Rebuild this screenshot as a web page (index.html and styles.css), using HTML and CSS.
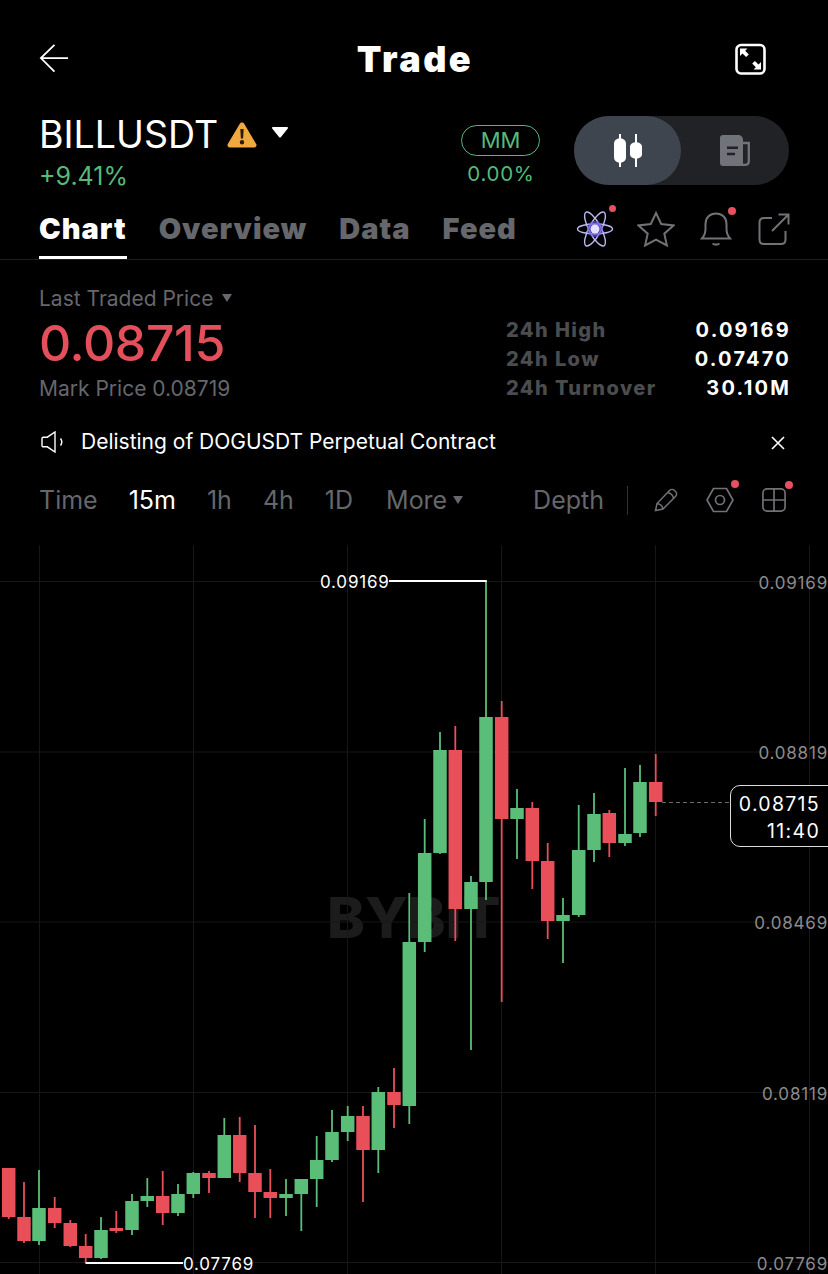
FILE: index.html
```html
<!DOCTYPE html>
<html lang="en">
<head>
<meta charset="utf-8">
<title>Trade</title>
<link rel="stylesheet" href="styles.css">
</head>
<body>
<main class="app">
  <header class="topbar">
    <svg class="ico-back" viewBox="0 0 32 32"><path d="M31 15H2M16.500 1 2 15l14.500 14.500"/></svg>
    <h1 class="title">Trade</h1>
    <svg class="ico-expand" viewBox="0 0 32 32"><rect x="1.500" y="1.500" width="28" height="28.500" rx="4.500"/><path class="fill" d="M5 5h7.500l-2.300 2.300 3.600 3.600-2.700 2.700-3.600-3.600L5 12.500zM26 26h-7.500l2.300-2.300-3.600-3.600 2.700-2.700 3.600 3.600 2.500-2.500z"/></svg>
  </header>

  <section class="symbol-row">
    <div class="symbol-info">
      <div class="symbol-name">
        <span class="symbol-text">BILLUSDT</span>
        <svg class="ico-warn" viewBox="0 0 30 27"><path d="M15 1.500c.9 0 1.700.5 2.200 1.300l12 20.300c.9 1.600-.2 3.400-2 3.400H2.800c-1.800 0-2.900-1.800-2-3.400l12-20.300c.5-.8 1.300-1.300 2.200-1.300z"/><path class="mark" d="M13.300 8h3.400l-.6 9.500h-2.200zM15 19a2.200 2.200 0 1 1 0 4.400 2.200 2.200 0 0 1 0-4.400z"/></svg>
        <svg class="ico-caret" viewBox="0 0 16 11"><path d="M1 0h14c1 0 1.300.8.800 1.500L8.800 10.200c-.4.500-1.200.5-1.600 0L.2 1.500C-.3.800 0 0 1 0z"/></svg>
      </div>
      <div class="change">+9.41%</div>
    </div>
    <div class="mm">
      <span class="mm-pill">MM</span>
      <span class="mm-value">0.00%</span>
    </div>
    <div class="toggle">
      <div class="toggle-thumb">
        <svg class="ico-candles" viewBox="0 0 28 33"><path d="M5 0h2v4.300c2.800.6 5 2.200 5 5.200v14c0 3-2.200 4.600-5 5.200V33H5v-4.300c-2.800-.6-5-2.200-5-5.200v-14c0-3 2.200-4.600 5-5.200zM21 0h2v8.300c2.800.6 5 1.900 5 4.200v8c0 2.300-2.200 3.600-5 4.200V33h-2v-8.300c-2.800-.6-5-1.900-5-4.200v-8c0-2.300 2.200-3.600 5-4.200z"/></svg>
      </div>
      <div class="toggle-off">
        <svg class="ico-doc" viewBox="0 0 30 31"><path class="page" d="M3 0h15c3 0 5 2 5 5v26H3c-2 0-3-1-3-3V3c0-2 1-3 3-3z"/><path class="lines" d="M7 12.700h11M7 19h8"/><path class="side" d="M22 8h6.800v18c0 2.500-1.500 3.900-4 3.900H22"/></svg>
      </div>
    </div>
  </section>

  <nav class="tabs">
    <a class="tab active">Chart</a>
    <a class="tab">Overview</a>
    <a class="tab">Data</a>
    <a class="tab">Feed</a>
    <div class="tab-icons">
      <span class="ico-wrap atom-wrap">
        <svg class="ico-atom" viewBox="0 0 38 36"><g class="orbits"><ellipse cx="19" cy="18" rx="17.500" ry="5"/><ellipse cx="19" cy="18" rx="19" ry="6" transform="rotate(62 19 18)"/><ellipse cx="19" cy="18" rx="19" ry="6" transform="rotate(-62 19 18)"/></g><circle class="core-glow" cx="19" cy="18" r="8"/><circle class="core" cx="19" cy="18" r="4.500"/></svg>
        <i class="dot dot-atom"></i>
      </span>
      <svg class="ico-star" viewBox="0 0 38 36"><path d="M19 2l5.200 11 12.300 1.400-9.200 8.300 2.600 11.800L19 28.600 8.100 34.500l2.600-11.800-9.200-8.300L13.800 13z"/></svg>
      <span class="ico-wrap bell-wrap">
        <svg class="ico-bell" viewBox="0 0 32 34"><path d="M2 26.500c2.500-3 3.500-5 3.500-9.500V12C5.500 5.500 10 1.500 16 1.500S26.500 5.500 26.500 12v5c0 4.500 1 6.500 3.500 9.500zM12.500 31.500c2 1.300 5 1.300 7 0"/></svg>
        <i class="dot dot-bell"></i>
      </span>
      <svg class="ico-share" viewBox="0 0 32 32"><path d="M14 5H6C3 5 1.500 6.500 1.500 9.500v17c0 3 1.500 4.500 4.500 4.500h17c3 0 4.500-1.500 4.500-4.500V18M14 18 30.500 1.500M20.500 1.500h10v10"/></svg>
    </div>
  </nav>

  <section class="stats">
    <div class="stats-left">
      <div class="last-label">Last Traded Price <svg class="ico-mini" viewBox="0 0 10 8"><path d="M0 0h10L5 8z"/></svg></div>
      <div class="last-price">0.08715</div>
      <div class="mark-price">Mark Price 0.08719</div>
    </div>
    <dl class="stats-right">
      <dt>24h High</dt><dd>0.09169</dd>
      <dt>24h Low</dt><dd>0.07470</dd>
      <dt>24h Turnover</dt><dd>30.10M</dd>
    </dl>
  </section>

  <section class="notice">
    <svg class="ico-speaker" viewBox="0 0 23 22"><path d="M1 7.500c0-.8.500-1.300 1.300-1.300h4L14 1v20l-7.700-5.200h-4c-.8 0-1.300-.5-1.300-1.300zM19.500 7.500c1.500 2 1.500 5 0 7"/></svg>
    <span class="notice-text">Delisting of DOGUSDT Perpetual Contract</span>
    <svg class="ico-close" viewBox="0 0 14 14"><path d="M1 1l12 12M13 1 1 13"/></svg>
  </section>

  <section class="toolbar">
    <span class="tf tf-time">Time</span>
    <span class="tf tf-on">15m</span>
    <span class="tf">1h</span>
    <span class="tf">4h</span>
    <span class="tf">1D</span>
    <span class="tf tf-more">More<svg class="ico-mini-more" viewBox="0 0 10 8"><path d="M0 0h10L5 8z"/></svg></span>
    <div class="tool-right">
      <span class="tf">Depth</span>
      <i class="sep"></i>
      <svg class="ico-pencil" viewBox="0 0 24 24"><path d="M1.500 22.500 3 15.500 15.500 2.500c1.500-1.500 3.500-1.500 5 0l1 1c1.500 1.500 1.500 3.500 0 5L9 21zM3 15.500c3 .5 5.500 3 6 5.500M13.500 4.500c3 .5 5.500 3 6 6"/></svg>
      <span class="ico-wrap hex-wrap">
        <svg class="ico-hex" viewBox="0 0 28 26"><path d="M7.500 1.500h13L27 13l-6.500 11.500h-13L1 13z"/><circle cx="14" cy="13" r="4.500"/></svg>
        <i class="dot dot-hex"></i>
      </span>
      <span class="ico-wrap grid-wrap">
        <svg class="ico-grid" viewBox="0 0 26 26"><rect x="1" y="1" width="24" height="24" rx="4.500"/><path d="M13 1v24M1 13h24"/></svg>
        <i class="dot dot-grid"></i>
      </span>
    </div>
  </section>

  <section class="chart">
    <span class="watermark">BYBIT</span>
    <svg class="chart-svg" viewBox="0 545 828 729">
      <path class="grid" d="M0 581.500H828M0 752H828M0 922H828M0 1092.500H828M0 1262.500H828M39.500 545V1274M193.500 545V1274M347.500 545V1274M501.500 545V1274M655.500 545V1274M809.500 545V1274"/>
      <path class="wick up" d="M39 1170V1245M101 1217V1259M132 1194V1235M147.300 1178V1207M178 1184V1216M193.300 1172V1198M224.300 1118V1178M286 1179V1216M301.300 1179V1231M316.700 1136V1207M332 1110V1162M347.700 1106V1141M378.300 1087V1173M409.300 893V1124M424.700 819V952M440 732V854M471 876V1050M486 581V900M517 789V859M563 898V963M578.700 805V917M594 793V862M625 768V846M640 765V837"/>
      <path class="body up" d="M39 1208V1241M101 1230V1258M132 1201V1230M147.300 1196V1201M178 1194V1213M193.300 1173V1194M224.300 1135V1178M286 1194V1198M301.300 1179V1194M316.700 1160V1179M332 1132V1160M347.700 1116V1132M378.300 1092V1150M409.300 942V1106M424.700 853V942M440 750V853M471 882V909M486 717V882M517 808V819M563 915V921M578.700 850V915M594 814V850M625 834V843M640 782V833"/>
      <path class="wick down" d="M8.700 1168V1219M24 1182V1243M54.700 1197V1228M70.300 1220V1247M85.700 1234V1263M116.300 1211V1233M162.700 1171V1225M209 1171V1193M239.700 1117V1182M255 1125V1218M270.300 1169V1218M363 1106V1202M394 1068V1128M455.300 726V941M501.700 701V1002M532.300 802V889M547.700 843V939M609.300 810V857M655.700 754V816"/>
      <path class="body down" d="M8.700 1168V1217M24 1217V1241M54.700 1208V1223M70.300 1223V1246M85.700 1246V1258M116.300 1228V1231M162.700 1196V1213M209 1173V1178M239.700 1135V1173M255 1173V1192M270.300 1192V1198M363 1116V1150M394 1092V1105M455.300 750V909M501.700 717V819M532.300 808V861M547.700 861V921M609.300 813V843M655.700 782V802"/>
      <path class="leader" d="M389 581H486.800M85.500 1263H183"/>
      <path class="price-line" d="M662 802.500H730"/>
    </svg>
    <span class="extreme extreme-high">0.09169</span>
    <span class="extreme extreme-low">0.07769</span>
    <span class="axis axis-1">0.09169</span>
    <span class="axis axis-2">0.08819</span>
    <span class="axis axis-3">0.08469</span>
    <span class="axis axis-4">0.08119</span>
    <span class="axis axis-5">0.07769</span>
    <div class="price-tag"><span>0.08715</span><span>11:40</span></div>
  </section>
</main>
</body>
</html>
```
FILE: styles.css
```css
* { box-sizing: border-box; margin: 0; padding: 0; }
html, body { background: #000; }
body { width: 828px; height: 1274px; overflow: hidden; font-family: Inter, "Liberation Sans", sans-serif; color: #fff; }
svg { display: block; flex: none; }
.app { width: 828px; height: 1274px; display: flex; flex-direction: column; }

/* top bar */
.topbar { height: 116px; padding: 42px 61px 0 39px; display: flex; justify-content: space-between; position: relative; }
.ico-back { width: 30px; height: 30px; margin-top: 2px; fill: none; stroke: #fff; stroke-width: 1.9; }
.title { position: absolute; left: 2px; right: 0; top: 36px; text-align: center; font-size: 36px; line-height: 46px; font-weight: 900; letter-spacing: 2.5px; }
.ico-expand { width: 32px; height: 33px; margin-top: 1px; fill: none; stroke: #fff; stroke-width: 2.6; }
.ico-expand .fill { fill: #fff; stroke: none; }

/* symbol row */
.symbol-row { height: 92px; padding: 0 39px; display: flex; align-items: flex-start; }
.symbol-info { width: 421px; }
.symbol-name { display: flex; align-items: center; height: 37px; }
.symbol-text { font-size: 37.500px; line-height: 37px; font-weight: 400; }
.ico-warn { width: 30px; height: 27px; margin-left: 9px; fill: #efa93f; }
.ico-warn .mark { fill: #2a1d08; }
.ico-caret { width: 16px; height: 11px; margin: -5px 0 0 15px; fill: #fff; }
.change { margin-top: 8px; font-size: 25px; line-height: 30px; color: #58b977; }
.mm { width: 79px; margin-top: 9px; display: flex; flex-direction: column; align-items: center; gap: 3px; margin-left: 1px; }
.mm-pill { width: 79px; height: 31px; border: 1px solid #58b977; border-radius: 16px; color: #58b977; font-size: 22px; line-height: 29px; text-align: center; }
.mm-value { color: #58b977; font-size: 20.500px; line-height: 30px; letter-spacing: .7px; padding-left: 1px; }
.toggle { width: 215px; height: 69px; margin-left: 34px; border-radius: 35px; background: #202225; display: flex; }
.toggle-thumb { width: 107px; height: 69px; border-radius: 35px; background: #3f454e; display: flex; align-items: center; justify-content: center; }
.ico-candles { width: 28px; height: 33px; fill: #fff; }
.toggle-off { flex: 1; display: flex; align-items: center; justify-content: center; }
.ico-doc { width: 30px; height: 31px; }
.ico-doc .page { fill: #707379; }
.ico-doc .lines { fill: none; stroke: #202225; stroke-width: 2.400; }
.ico-doc .side { fill: none; stroke: #707379; stroke-width: 2.300; }

/* tabs */
.tabs { height: 52px; padding: 0 38px 0 39px; display: flex; align-items: flex-start; border-bottom: 1px solid #1e1e1e; gap: 32px; }
.tab { height: 51px; font-size: 29px; line-height: 42px; font-weight: 900; color: #65676b; letter-spacing: 1px; }
.tab.active { color: #fff; border-bottom: 3px solid #fff; }
.tab-icons { margin-left: auto; height: 42px; display: flex; align-items: center; }
.ico-wrap { position: relative; display: block; flex: none; }
.dot { position: absolute; width: 8px; height: 8px; border-radius: 50%; background: #e84f5f; }
.ico-atom { width: 38px; height: 36px; }
.ico-atom .orbits { fill: none; stroke: #bdbaf2; stroke-width: 1.400; }
.ico-atom .core-glow { fill: #6a5be0; opacity: .7; }
.ico-atom .core { fill: #e4e1ff; }
.dot-atom { right: -2px; top: -6px; width: 7px; height: 7px; }
.ico-star { width: 38px; height: 36px; margin-left: 23px; fill: none; stroke: #707276; stroke-width: 2; }
.bell-wrap { margin-left: 25px; }
.ico-bell { width: 32px; height: 34px; fill: none; stroke: #707276; stroke-width: 2; }
.dot-bell { right: -4px; top: -5px; }
.ico-share { width: 32px; height: 32px; margin-left: 26px; fill: none; stroke: #707276; stroke-width: 2; }

/* stats */
.stats { height: 152px; padding: 26px 39px 0 39px; display: flex; justify-content: space-between; }
.last-label { display: flex; align-items: center; gap: 9px; font-size: 21px; line-height: 26px; color: #65676b; }
.ico-mini { width: 10px; height: 8px; fill: #65676b; margin-top: -2px; }
.last-price { margin-top: 2px; font-size: 50px; line-height: 58px; font-weight: 500; color: #e3505c; letter-spacing: -.4px; }
.mark-price { margin-top: 3px; font-size: 21px; line-height: 28px; color: #65676b; }
.stats-right { width: 283px; margin-top: 30px; display: grid; grid-template-columns: 1fr auto; grid-auto-rows: 29px; }
.stats-right dt { font-size: 20px; line-height: 29px; font-weight: 800; color: #4b4c4f; letter-spacing: 1.400px; }
.stats-right dd { font-size: 20px; line-height: 29px; font-weight: 700; color: #fff; text-align: right; letter-spacing: 2.200px; margin-right: -2px; }

/* notice */
.notice { height: 57px; padding: 2px 0 0 41px; display: flex; align-items: center; }
.ico-speaker { width: 23px; height: 22px; fill: none; stroke: #fff; stroke-width: 1.400; }
.notice-text { margin-left: 17px; font-size: 21px; line-height: 28px; color: #fff; }
.ico-close { width: 14px; height: 14px; margin-left: auto; margin-right: 43px; margin-top: 3px; fill: none; stroke: #fff; stroke-width: 1.600; }

/* timeframes */
.toolbar { height: 76px; padding: 0 42px 14px 39px; display: flex; align-items: center; gap: 31px; }
.tf { font-size: 25px; line-height: 32px; color: #65676b; white-space: nowrap; }
.tf-on { color: #fff; }
.tf-more { display: flex; align-items: center; gap: 6px; margin-left: 2px; }
.ico-mini-more { width: 10px; height: 8px; fill: #65676b; }
.tool-right { margin-left: auto; display: flex; align-items: center; }
.sep { display: block; width: 1px; height: 29px; margin-left: 23px; background: #333; }
.ico-pencil { width: 24px; height: 24px; margin-left: 26px; fill: none; stroke: #707276; stroke-width: 1.500; }
.hex-wrap { margin-left: 28px; }
.ico-hex { width: 28px; height: 26px; fill: none; stroke: #707276; stroke-width: 1.700; }
.dot-hex { right: -5px; top: -7px; }
.grid-wrap { margin-left: 28px; }
.ico-grid { width: 24px; height: 24px; fill: none; stroke: #707276; stroke-width: 1.800; }
.dot-grid { right: -7px; top: -7px; }

/* chart: a free canvas, each item sits at its own price/time coordinate */
.chart { position: relative; flex: 1; overflow: hidden; }
.chart-svg { position: absolute; left: 0; top: 0; width: 828px; height: 729px; }
.grid { fill: none; stroke: #171717; stroke-width: 1; }
.wick { fill: none; stroke-width: 1.800; }
.body { fill: none; stroke-width: 13.500; }
.up { stroke: #5abd78; }
.down { stroke: #e84f59; }
.leader { fill: none; stroke: #fff; stroke-width: 1.800; }
.price-line { fill: none; stroke: #6a6a6a; stroke-width: 1; stroke-dasharray: 4 3; }
.watermark { position: absolute; left: 327px; top: 338px; font-size: 57px; line-height: 70px; font-weight: 800; color: #1c1c1c; letter-spacing: 0; }
.extreme, .axis { position: absolute; font-size: 17px; line-height: 22px; letter-spacing: .8px; white-space: nowrap; }
.extreme { color: #fff; }
.extreme-high { left: 320px; top: 26px; }
.extreme-low { left: 183px; top: 708px; }
.axis { right: 0; color: #8c8c8c; }
.axis-1 { top: 27px; }
.axis-2 { top: 197px; }
.axis-3 { top: 367px; }
.axis-4 { top: 538px; }
.axis-5 { top: 708px; }
.price-tag { position: absolute; left: 730px; top: 240px; width: 110px; height: 62px; border: 1px solid #ddd; border-radius: 10px; background: #000; padding: 5px 19px 0 0; display: flex; flex-direction: column; align-items: flex-end; font-size: 19.500px; line-height: 27px; letter-spacing: 1.300px; color: #fff; }
```
